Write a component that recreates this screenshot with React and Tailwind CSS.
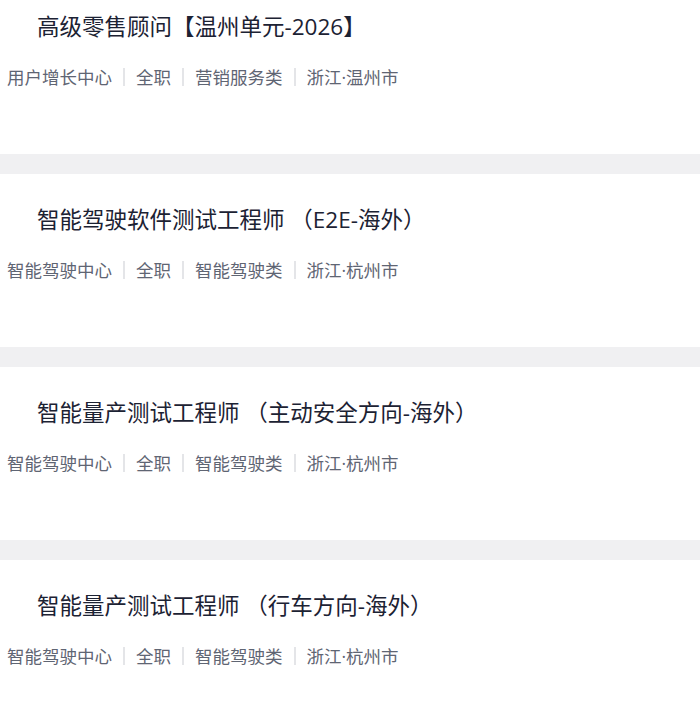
import React from "react";

const jobs = [
  {
    title: "高级零售顾问【温州单元-2026】",
    tags: ["用户增长中心", "全职", "营销服务类", "浙江·温州市"],
  },
  {
    title: "智能驾驶软件测试工程师 （E2E-海外）",
    tags: ["智能驾驶中心", "全职", "智能驾驶类", "浙江·杭州市"],
  },
  {
    title: "智能量产测试工程师 （主动安全方向-海外）",
    tags: ["智能驾驶中心", "全职", "智能驾驶类", "浙江·杭州市"],
  },
  {
    title: "智能量产测试工程师 （行车方向-海外）",
    tags: ["智能驾驶中心", "全职", "智能驾驶类", "浙江·杭州市"],
  },
];

const JobCard = ({ job }) => (
  <div className="h-[173px] bg-white pt-[30px]">
    <h3 className="pl-[37px] text-[22.5px] leading-[32px] font-normal text-[#1c2233] whitespace-nowrap">
      {job.title}
    </h3>
    <div className="mt-[21px] pl-[7px] flex items-center text-[17.5px] leading-[26px] text-[#5f6573] whitespace-nowrap">
      {job.tags.map((tag, i) => (
        <React.Fragment key={i}>
          {i > 0 && <span className="mx-[11px] w-[2px] h-[18px] bg-[#e4e5e8]" />}
          <span>{tag}</span>
        </React.Fragment>
      ))}
    </div>
  </div>
);

export default function App() {
  return (
    <div
      className="w-[700px] h-[710px] overflow-hidden bg-[#f0f0f2]"
      style={{ fontFamily: '"Open Sans", "Noto Sans CJK SC", sans-serif' }}
    >
      <div className="-mt-[19px] flex flex-col gap-[20px]">
        {jobs.map((job, i) => (
          <JobCard key={i} job={job} />
        ))}
      </div>
    </div>
  );
}
